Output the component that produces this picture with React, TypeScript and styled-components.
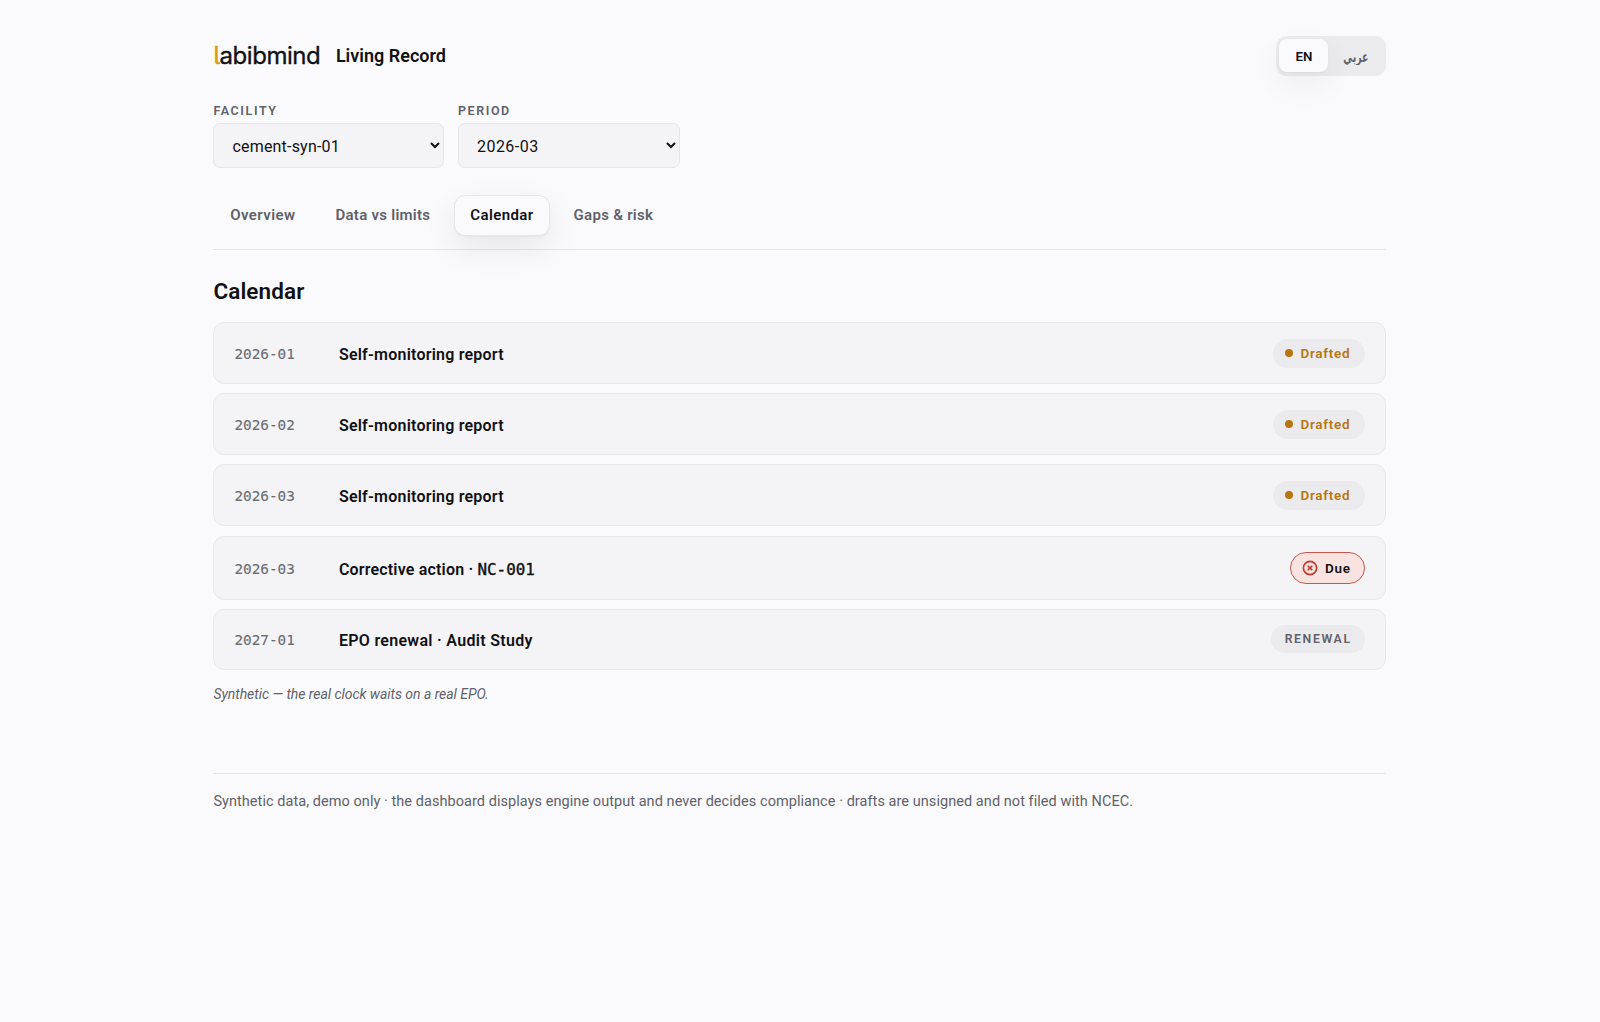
import React, { useState } from "react";
import styled, { createGlobalStyle, css } from "styled-components";

const GlobalStyle = createGlobalStyle`
  *, *::before, *::after { box-sizing: border-box; }
  body {
    margin: 0;
    background: #fafafc;
    color: #111114;
    font-family: Roboto, "DejaVu Sans", sans-serif;
  }
  button, select { font-family: inherit; }
`;

const Page = styled.div`
  width: 1174px;
  margin: 0 auto;
  padding: 35.5px 0.6px 0 0.4px;
`;

const Header = styled.header`
  display: flex;
  align-items: center;
  justify-content: space-between;
  height: 40px;
`;

const Brand = styled.div`
  display: flex;
  align-items: center;
`;

const Wordmark = styled.span`
  width: 122.5px;
  padding-top: 1.5px;
  font-family: Inter, sans-serif;
  font-size: 24px;
  line-height: 30px;
  letter-spacing: -0.46px;
  font-feature-settings: "cv05";
  -webkit-text-stroke: 0.35px currentColor;
`;

const Accent = styled.span`
  color: #e09a1a;
  -webkit-text-stroke: 0.6px currentColor;
`;

const Product = styled.span`
  padding-top: 1px;
  font-size: 18px;
  font-weight: 600;
  line-height: 30px;
`;

const LangSwitch = styled.div`
  display: flex;
  width: 110.5px;
  height: 40px;
  padding: 3.5px;
  border-radius: 11px;
  background: #ebebed;
`;

const LangButton = styled.button<{ $active?: boolean }>`
  width: ${(p) => (p.$active ? 49 : 54.5)}px;
  padding: 1px 0 0;
  border: 0;
  border-radius: 8px;
  background: transparent;
  color: #5f616a;
  font-size: 13.3px;
  font-weight: 600;
  ${(p) =>
    p.$active &&
    css`
      background: #fafafc;
      color: #111114;
      box-shadow: 0 1px 2px rgba(0, 0, 0, 0.04), 0 12px 32px rgba(0, 0, 0, 0.06);
    `}
`;

const Arabic = styled.span`
  display: inline-block;
  font-family: "DejaVu Sans", sans-serif;
  transform: scale(0.7, 1.12);
`;

const Filters = styled.div`
  display: flex;
  gap: 13.5px;
  margin-top: 27px;
`;

const Field = styled.label<{ $width: number }>`
  display: flex;
  flex-direction: column;
  width: ${(p) => p.$width}px;
`;

const FieldLabel = styled.span`
  height: 20.8px;
  color: #5f616a;
  font-size: 12.5px;
  font-weight: 600;
  line-height: 16px;
  letter-spacing: 1.6px;
`;

const Select = styled.select<{ $track: number }>`
  height: 44.7px;
  padding: 1px 14px 0;
  border: 1px solid #e6e6e9;
  border-radius: 7px;
  background: #f4f4f6;
  color: #111114;
  font-size: 16px;
  letter-spacing: ${(p) => p.$track}px;
`;

const Tabs = styled.nav`
  display: flex;
  gap: 6.4px;
  height: 82px;
  padding-top: 26.6px;
  border-bottom: 1px solid #e4e4e7;
`;

const Tab = styled.button<{ $active?: boolean; $track: number }>`
  height: 41px;
  padding: 0 15.8px 1px;
  border: 1px solid transparent;
  border-radius: 11px;
  background: transparent;
  color: #5f616a;
  font-size: 15px;
  font-weight: 600;
  letter-spacing: ${(p) => p.$track}px;
  ${(p) =>
    p.$active &&
    css`
      border-color: #e6e6e9;
      background: #fafafc;
      color: #111114;
      box-shadow: 0 1px 2px rgba(0, 0, 0, 0.04), 0 12px 32px rgba(0, 0, 0, 0.08);
    `}
`;

const Heading = styled.h1`
  margin: 26px 0 16.3px;
  font-size: 22.5px;
  font-weight: 600;
  line-height: 30px;
  letter-spacing: 0.1px;
`;

const List = styled.ul`
  display: flex;
  flex-direction: column;
  gap: 9.1px;
  margin: 0;
  padding: 0;
  list-style: none;
`;

const Item = styled.li<{ $height: number }>`
  display: grid;
  grid-template-columns: 104.5px 1fr auto;
  align-items: center;
  height: ${(p) => p.$height}px;
  padding: 0 20px;
  border: 1px solid #e8e8eb;
  border-radius: 11px;
  background: #f4f4f6;
`;

const DateText = styled.time`
  padding-top: 2px;
  color: #6b6d75;
  font-family: "DejaVu Sans Mono", monospace;
  font-size: 14.35px;
  -webkit-text-stroke: 0.15px currentColor;
`;

const Title = styled.span<{ $track: number }>`
  padding-top: 3px;
  font-size: 16px;
  font-weight: 600;
  letter-spacing: ${(p) => p.$track}px;
`;

const Code = styled.span`
  font-family: "DejaVu Sans Mono", monospace;
  font-size: 15.9px;
  font-weight: 400;
  letter-spacing: 0;
  -webkit-text-stroke: 0.4px currentColor;
`;

const pill = css`
  display: flex;
  align-items: center;
  border-radius: 99px;
  font-size: 13.5px;
  font-weight: 600;
  letter-spacing: 0.7px;
`;

const DraftedPill = styled.span`
  ${pill}
  gap: 7px;
  width: 92px;
  height: 29px;
  padding-left: 12px;
  background: #ebebed;
  color: #b8750f;
`;

const Dot = styled.i`
  width: 8px;
  height: 8px;
  border-radius: 50%;
  background: currentColor;
`;

const DuePill = styled.span`
  ${pill}
  gap: 7px;
  width: 75.5px;
  height: 32px;
  padding: 0 0 0 11px;
  border: 1.5px solid #c9564b;
  background: #f8e3e0;
`;

const RenewalPill = styled.span`
  ${pill}
  justify-content: center;
  width: 94.5px;
  height: 28px;
  background: #ebebed;
  color: #5f616a;
  font-size: 12.3px;
  letter-spacing: 1.6px;
`;

const Note = styled.p`
  margin: 14.3px 0 0;
  color: #5f616a;
  font-size: 14px;
  font-style: italic;
  line-height: 20px;
  letter-spacing: -0.04px;
`;

const Footer = styled.footer`
  margin-top: 69px;
  padding-top: 17px;
  border-top: 1px solid #e4e4e7;
  color: #5f616a;
  font-size: 14.5px;
  line-height: 22px;
  letter-spacing: 0.055px;
`;

function DueIcon() {
  return (
    <svg width="16" height="16" viewBox="0 0 16 16" fill="none" stroke="#c0392b" strokeWidth="1.6">
      <circle cx="8" cy="8" r="6.6" />
      <path d="M5.7 5.7l4.6 4.6M10.3 5.7l-4.6 4.6" />
    </svg>
  );
}

const Drafted = () => (
  <DraftedPill>
    <Dot />
    Drafted
  </DraftedPill>
);

const rows = [
  { date: "2026-01", title: "Self-monitoring report", track: 0.22, height: 62, status: <Drafted /> },
  { date: "2026-02", title: "Self-monitoring report", track: 0.22, height: 62, status: <Drafted /> },
  { date: "2026-03", title: "Self-monitoring report", track: 0.22, height: 62, status: <Drafted /> },
  {
    date: "2026-03",
    title: "Corrective action · ",
    code: "NC-001",
    track: 0.18,
    height: 64,
    status: (
      <DuePill>
        <DueIcon />
        Due
      </DuePill>
    ),
  },
  {
    date: "2027-01",
    title: "EPO renewal · Audit Study",
    track: 0.3,
    height: 61,
    status: <RenewalPill>RENEWAL</RenewalPill>,
  },
];

const tabs = [
  { name: "Overview", track: 0.42 },
  { name: "Data vs limits", track: 0.27 },
  { name: "Calendar", track: 0.4 },
  { name: "Gaps & risk", track: 0.28 },
];

export default function App() {
  const [tab, setTab] = useState("Calendar");
  return (
    <>
      <GlobalStyle />
      <Page>
        <Header>
          <Brand>
            <Wordmark>
              <Accent>l</Accent>abibmind
            </Wordmark>
            <Product>Living Record</Product>
          </Brand>
          <LangSwitch>
            <LangButton $active>EN</LangButton>
            <LangButton>
              <Arabic lang="ar">عربي</Arabic>
            </LangButton>
          </LangSwitch>
        </Header>
        <Filters>
          <Field $width={231}>
            <FieldLabel>FACILITY</FieldLabel>
            <Select $track={0.2}>
              <option>cement-syn-01</option>
            </Select>
          </Field>
          <Field $width={222}>
            <FieldLabel>PERIOD</FieldLabel>
            <Select $track={0.5}>
              <option>2026-03</option>
            </Select>
          </Field>
        </Filters>
        <Tabs>
          {tabs.map((t) => (
            <Tab key={t.name} $track={t.track} $active={t.name === tab} onClick={() => setTab(t.name)}>
              {t.name}
            </Tab>
          ))}
        </Tabs>
        <Heading>Calendar</Heading>
        <List>
          {rows.map((r, i) => (
            <Item key={i} $height={r.height}>
              <DateText>{r.date}</DateText>
              <Title $track={r.track}>
                {r.title}
                {r.code && <Code>{r.code}</Code>}
              </Title>
              {r.status}
            </Item>
          ))}
        </List>
        <Note>Synthetic — the real clock waits on a real EPO.</Note>
        <Footer>
          Synthetic data, demo only · the dashboard displays engine output and never decides compliance · drafts are
          unsigned and not filed with NCEC.
        </Footer>
      </Page>
    </>
  );
}
